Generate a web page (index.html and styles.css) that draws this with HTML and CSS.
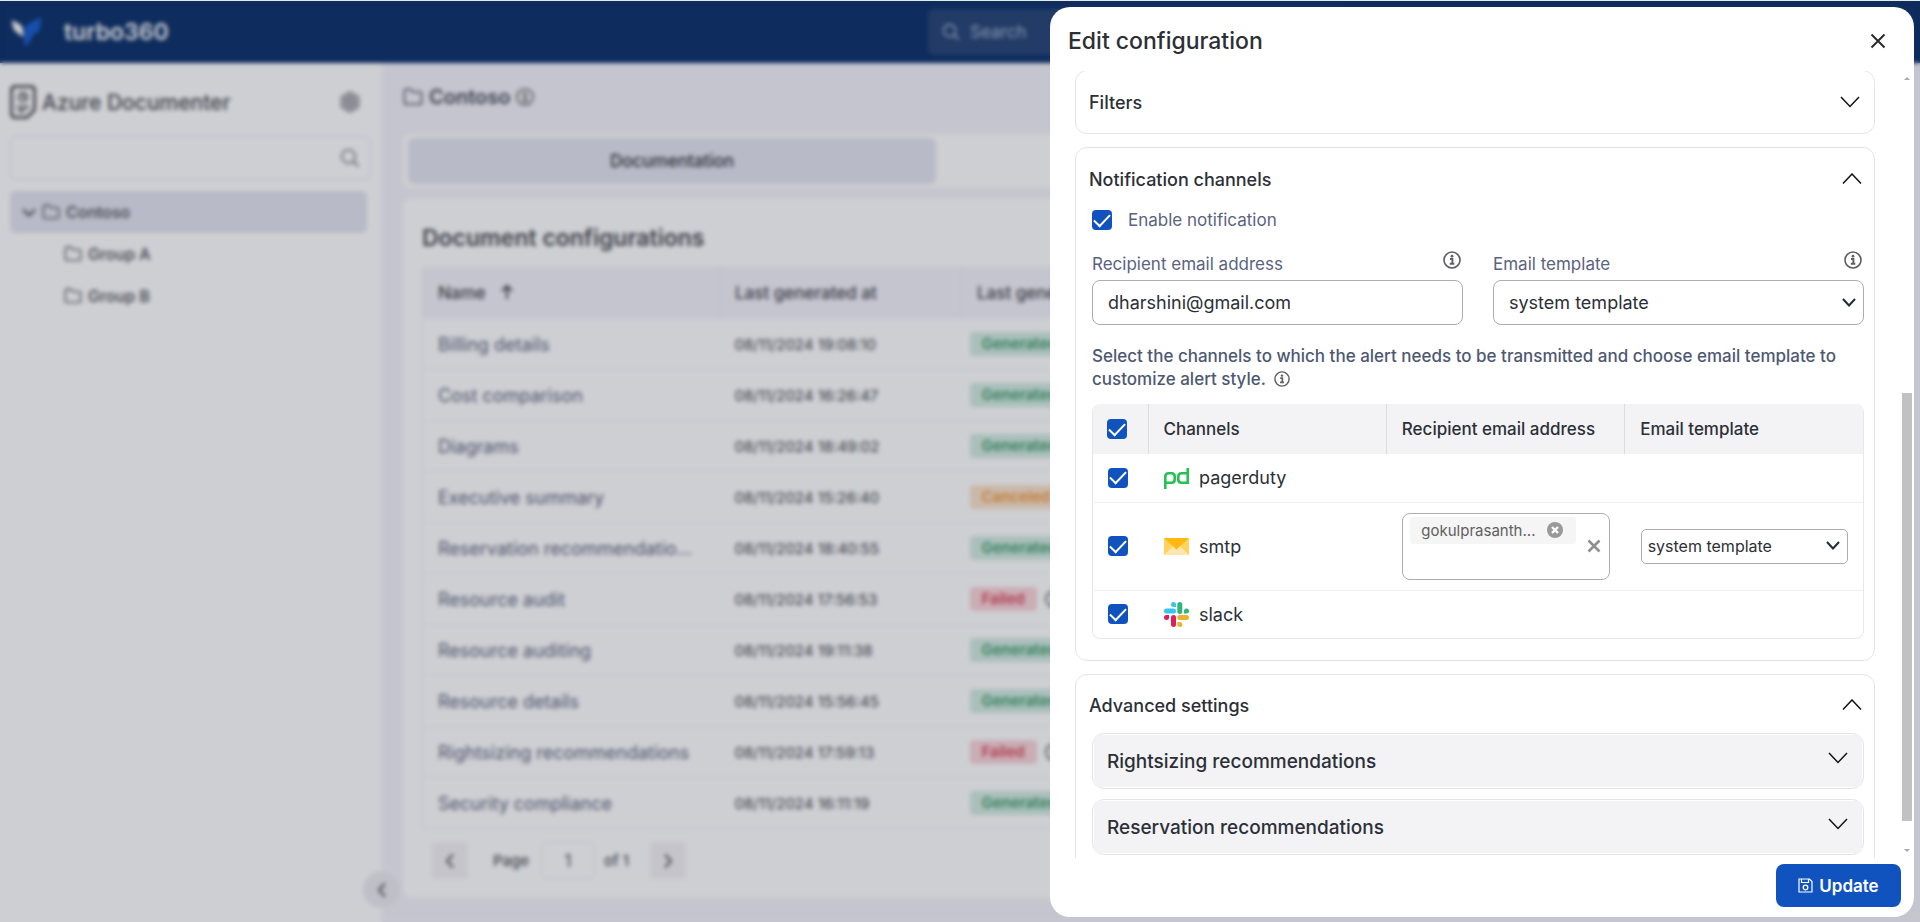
FILE: index.html
```html
<!DOCTYPE html>
<html lang="en">
<head>
<meta charset="utf-8">
<title>Azure Documenter - Edit configuration</title>
<link rel="stylesheet" href="styles.css">
</head>
<body>
<svg class="sprite" aria-hidden="true">
  <symbol id="folder" viewBox="0 0 22 20"><path d="M1.5 16V3.5Q1.5 1.5 3.500 1.500H8L11 4.500H18.500Q20.500 4.500 20.500 6.500V16Q20.500 18 18.500 18H3.500Q1.500 18 1.500 16Z" fill="none" stroke="currentColor" stroke-width="1.700"/></symbol>
  <symbol id="search" viewBox="0 0 20 20"><circle cx="8.500" cy="8.500" r="6.700" fill="none" stroke="currentColor" stroke-width="1.800"/><path d="M13.500 13.500L18.500 18.500" stroke="currentColor" stroke-width="2"/></symbol>
  <symbol id="info" viewBox="0 0 18 18"><circle cx="9" cy="9" r="8" fill="none" stroke="currentColor" stroke-width="1.600"/><circle cx="9" cy="5.200" r="1.400" fill="currentColor"/><path d="M7 8H9.400V12.600M6.800 12.800H11.300" fill="none" stroke="currentColor" stroke-width="1.900"/></symbol>
  <symbol id="down" viewBox="0 0 20 12"><path d="M1 1L10 10.500L19 1" fill="none" stroke="currentColor" stroke-width="1.500"/></symbol>
  <symbol id="up" viewBox="0 0 20 12"><path d="M1 10.500L10 1L19 10.500" fill="none" stroke="currentColor" stroke-width="1.500"/></symbol>
  <symbol id="left" viewBox="0 0 10 16"><path d="M8 1.500L2 8L8 14.500" fill="none" stroke="currentColor" stroke-width="2"/></symbol>
  <symbol id="right" viewBox="0 0 10 16"><path d="M2 1.500L8 8L2 14.500" fill="none" stroke="currentColor" stroke-width="2"/></symbol>
</svg>

<div class="app">
  <header class="topbar">
    <div class="brand">
      <svg class="brand-mark" viewBox="0 0 30 30"><path d="M0 3L9 8Q12 12 11 20L3 14Q0 10 0 3Z" fill="#fff"/><path d="M29 0L16 7Q12 10 12 17V29Q19 27 20 19L27 14Q29 10 29 0Z" fill="#1c5fd0"/></svg>
      <span class="brand-name">turbo360</span>
    </div>
    <label class="top-search"><svg class="i18"><use href="#search"/></svg><input type="text" placeholder="Search" aria-label="Search"></label>
  </header>
  <div class="columns">
    <aside class="sidebar">
      <div class="side-head">
        <svg class="doc-icon" viewBox="0 0 26 34"><path d="M5 1.500H21Q24.500 1.500 24.500 5V25L17 32.500H5Q1.500 32.500 1.500 29V5Q1.500 1.500 5 1.500Z" fill="none" stroke="#3c3e44" stroke-width="2.500"/><circle cx="13" cy="12" r="4.500" fill="none" stroke="#3c3e44" stroke-width="1.600"/><path d="M13 9V12L15 13M7 22H19M8 26H15" fill="none" stroke="#3c3e44" stroke-width="2"/></svg>
        <h1 class="side-title">Azure Documenter</h1>
        <svg class="gear" viewBox="0 0 22 22"><path d="M11 1L19.500 6V16L11 21L2.500 16V6Z" fill="#b5b6bb" stroke="#a3a4aa" stroke-width="2"/><circle cx="11" cy="11" r="3.500" fill="none" stroke="#9d9fa5" stroke-width="2"/></svg>
      </div>
      <label class="side-search"><input type="text" aria-label="Search groups"><svg class="i20"><use href="#search"/></svg></label>
      <nav class="tree">
        <a class="node node-on" href="#"><svg class="caret" viewBox="0 0 14 9"><path d="M1 1.500L7 7.500L13 1.500" fill="none" stroke="currentColor" stroke-width="2.200"/></svg><svg class="fold"><use href="#folder"/></svg>Contoso</a>
        <a class="node node-sub" href="#"><svg class="fold"><use href="#folder"/></svg>Group A</a>
        <a class="node node-sub" href="#"><svg class="fold"><use href="#folder"/></svg>Group B</a>
      </nav>
      <button class="collapse" aria-label="Collapse"><svg class="pg"><use href="#left"/></svg></button>
    </aside>
    <main class="main">
      <div class="crumb"><svg class="fold-lg"><use href="#folder"/></svg><span>Contoso</span><svg class="i18"><use href="#info"/></svg></div>
      <div class="tabs"><button class="tab tab-on">Documentation</button><button class="tab"></button></div>
      <section class="card">
        <h2 class="card-title">Document configurations</h2>
        <table class="docs">
          <colgroup><col class="c-name"><col class="c-date"><col></colgroup>
          <thead><tr><th>Name <svg class="sort" viewBox="0 0 14 16"><path d="M7 15V2M2 7L7 2L12 7" fill="none" stroke="currentColor" stroke-width="2"/></svg></th><th>Last generated at</th><th>Last generated status</th></tr></thead>
          <tbody>
            <tr><td>Billing details</td><td>08/11/2024 19:08:10</td><td><span class="tag ok">Generated</span></td></tr>
            <tr><td>Cost comparison</td><td>08/11/2024 16:26:47</td><td><span class="tag ok">Generated</span></td></tr>
            <tr><td>Diagrams</td><td>08/11/2024 18:49:02</td><td><span class="tag ok">Generated</span></td></tr>
            <tr><td>Executive summary</td><td>08/11/2024 15:26:40</td><td><span class="tag warn">Canceled</span></td></tr>
            <tr><td>Reservation recommendatio…</td><td>08/11/2024 18:40:55</td><td><span class="tag ok">Generated</span></td></tr>
            <tr><td>Resource audit</td><td>08/11/2024 17:56:53</td><td><span class="tag bad">Failed</span><svg class="i18 tag-info"><use href="#info"/></svg></td></tr>
            <tr><td>Resource auditing</td><td>08/11/2024 19:11:38</td><td><span class="tag ok">Generated</span></td></tr>
            <tr><td>Resource details</td><td>08/11/2024 15:56:45</td><td><span class="tag ok">Generated</span></td></tr>
            <tr><td>Rightsizing recommendations</td><td>08/11/2024 17:59:13</td><td><span class="tag bad">Failed</span><svg class="i18 tag-info"><use href="#info"/></svg></td></tr>
            <tr><td>Security compliance</td><td>08/11/2024 16:11:19</td><td><span class="tag ok">Generated</span></td></tr>
          </tbody>
        </table>
        <div class="pager">
          <button class="pg-btn" aria-label="Previous page"><svg class="pg"><use href="#left"/></svg></button>
          <label class="pg-label" for="page">Page</label><input class="pg-input" id="page" type="text" value="1"><span class="pg-of">of 1</span>
          <button class="pg-btn" aria-label="Next page"><svg class="pg"><use href="#right"/></svg></button>
        </div>
      </section>
    </main>
  </div>
</div>

<div class="overlay"></div>

<div class="drawer" role="dialog" aria-labelledby="drawer-title">
  <header class="drawer-head">
    <h2 class="drawer-title" id="drawer-title">Edit configuration</h2>
    <button class="close" aria-label="Close"><svg viewBox="0 0 16 16"><path d="M1.500 1.500L14.500 14.500M14.500 1.500L1.500 14.500" stroke="#2b2b2b" stroke-width="2"/></svg></button>
  </header>
  <div class="drawer-body">
    <div class="panels">
      <section class="panel panel-first">
        <button class="panel-head">Filters<svg class="chev chev-in"><use href="#down"/></svg></button>
      </section>
      <section class="panel">
        <button class="panel-head">Notification channels<svg class="chev"><use href="#up"/></svg></button>
        <div class="panel-body">
          <label class="enable"><input class="check" type="checkbox" checked>Enable notification</label>
          <div class="fields">
            <div class="field">
              <div class="field-top"><label for="email">Recipient email address</label><svg class="i18"><use href="#info"/></svg></div>
              <input class="control" id="email" type="text" value="dharshini@gmail.com">
            </div>
            <div class="field">
              <div class="field-top"><label for="tpl">Email template</label><svg class="i18"><use href="#info"/></svg></div>
              <div class="select-wrap"><select class="control" id="tpl"><option>system template</option></select><svg class="select-chev" viewBox="0 0 14 9"><path d="M1 1L7 7.500L13 1" fill="none" stroke="#222b38" stroke-width="2"/></svg></div>
            </div>
          </div>
          <p class="hint">Select the channels to which the alert needs to be transmitted and choose email template to customize alert style. <svg class="i16"><use href="#info"/></svg></p>
          <div class="channels-wrap">
          <table class="channels">
            <colgroup><col class="k-check"><col><col><col></colgroup>
            <thead><tr><th><input class="check" type="checkbox" checked aria-label="Select all"></th><th>Channels</th><th>Recipient email address</th><th>Email template</th></tr></thead>
            <tbody>
              <tr class="short"><td><input class="check" type="checkbox" checked aria-label="pagerduty"></td>
                <td><span class="chan"><svg class="chan-icon" viewBox="0 0 25 25"><g fill="none" stroke="#25c151" stroke-width="2.600"><path d="M1.300 24V11.500Q1.300 8.300 4.500 8.300H7.500Q10.700 8.300 10.700 11.500V14.500Q10.700 17.700 7.500 17.700H1.300"/><path d="M23.700 3V17.700H17.500Q14.300 17.700 14.300 14.500V11.500Q14.300 8.300 17.500 8.300H23.700"/></g></svg>pagerduty</span></td><td></td><td></td></tr>
              <tr class="tall"><td><input class="check" type="checkbox" checked aria-label="smtp"></td>
                <td><span class="chan"><svg class="chan-icon" viewBox="0 0 25 25"><path d="M0 4H25V21H0Z" fill="#ffd262"/><path d="M0 21L12.500 9L25 21Z" fill="#ffe6ad"/><path d="M0 4H25L12.500 15.500Z" fill="#ffb80f"/></svg>smtp</span></td>
                <td><div class="chips"><span class="chip"><span class="chip-text">gokulprasanth...</span><button class="chip-x" aria-label="Remove"><svg viewBox="0 0 16 16"><circle cx="8" cy="8" r="8" fill="#999"/><path d="M5 5L11 11M11 5L5 11" stroke="#fff" stroke-width="2.400"/></svg></button></span><button class="clear" aria-label="Clear all"><svg viewBox="0 0 14 14"><path d="M1.500 1.500L12.500 12.500M12.500 1.500L1.500 12.500" stroke="#8f8f8f" stroke-width="2.600"/></svg></button></div></td>
                <td><div class="select-wrap"><select class="control control-sm" aria-label="smtp template"><option>system template</option></select><svg class="select-chev" viewBox="0 0 14 9"><path d="M1 1L7 7.500L13 1" fill="none" stroke="#222b38" stroke-width="2"/></svg></div></td></tr>
              <tr class="short"><td><input class="check" type="checkbox" checked aria-label="slack"></td>
                <td><span class="chan"><svg class="chan-icon" viewBox="0 0 25 25"><g fill="#36c5f0"><path d="M9.500 0A2.500 2.500 0 0 0 9.500 5H12V2.500A2.500 2.500 0 0 0 9.500 0Z"/><rect x="0" y="6.500" width="12" height="5" rx="2.500"/></g><g fill="#2eb67d"><rect x="13.300" y="0" width="5" height="12" rx="2.500"/><path d="M25 9A2.500 2.500 0 0 0 20 9V11.500H22.500A2.500 2.500 0 0 0 25 9Z"/></g><g fill="#ecb22e"><rect x="13.300" y="13" width="11.700" height="5" rx="2.500"/><path d="M15.800 25A2.500 2.500 0 0 0 15.800 20H13.300V22.500A2.500 2.500 0 0 0 15.800 25Z"/></g><g fill="#e01e5a"><rect x="7" y="13" width="5" height="12" rx="2.500"/><path d="M0 15.500A2.500 2.500 0 0 0 5 15.500V13H2.500A2.500 2.500 0 0 0 0 15.500Z"/></g></svg>slack</span></td><td></td><td></td></tr>
            </tbody>
          </table>
          </div>
        </div>
      </section>
      <section class="panel">
        <button class="panel-head panel-head-tight">Advanced settings<svg class="chev"><use href="#up"/></svg></button>
        <div class="panel-body subs">
          <div class="sub"><button class="sub-head">Rightsizing recommendations<svg class="chev"><use href="#down"/></svg></button></div>
          <div class="sub"><button class="sub-head">Reservation recommendations<svg class="chev"><use href="#down"/></svg></button></div>
        </div>
      </section>
    </div>
    <div class="scrollbar" aria-hidden="true">
      <svg class="arrow" viewBox="0 0 6 3"><path d="M0 3L3 0L6 3Z" fill="#a9a9a9"/></svg>
      <div class="track"><div class="thumb"></div></div>
      <svg class="arrow" viewBox="0 0 6 3"><path d="M0 0L3 3L6 0Z" fill="#a9a9a9"/></svg>
    </div>
  </div>
  <footer class="drawer-foot">
    <button class="update"><svg class="save" viewBox="0 0 15 15"><path d="M1 1H11.500L14 3.500V14H1ZM3.500 1V4.500H10.500V1" fill="none" stroke="#fff" stroke-width="1.200"/><circle cx="7.500" cy="9.500" r="2.300" fill="none" stroke="#fff" stroke-width="1.300"/></svg>Update</button>
  </footer>
</div>
</body>
</html>
```
FILE: styles.css
```css
* { box-sizing: border-box; }
html, body { height: 100%; }
body { margin: 0; overflow: hidden; font-family: Inter, "Noto Sans", sans-serif; font-size: 17px; color: #2c3036; }
h1, h2, p { margin: 0; }
button { font: inherit; color: inherit; background: none; border: 0; padding: 0; }
input, select { font: inherit; color: inherit; }
svg { display: block; flex: none; }
.sprite { position: absolute; width: 0; height: 0; }
.i16 { width: 16px; height: 16px; color: #5f6063; }
.i18 { width: 18px; height: 18px; color: #5f6063; }
.i20 { width: 20px; height: 20px; color: #8b8c90; }

/* Page behind the drawer */
.app { height: 100%; display: flex; flex-direction: column; border-top: 1px solid #e3ece8; }
.topbar { height: 62px; flex: none; background: #0f346c; display: flex; align-items: center; padding: 0 12px; }
.brand { width: 916px; display: flex; align-items: center; gap: 22px; }
.brand-mark { width: 30px; height: 30px; }
.brand-name { color: #fff; font-size: 23px; font-weight: 600; }
.top-search { display: flex; align-items: center; gap: 8px; height: 46px; width: 420px; padding: 0 14px; border-radius: 6px; background: #284778; }
.top-search .i18 { color: #a9b8d2; }
.top-search input { background: none; border: 0; min-width: 0; outline: 0; }
.top-search input::placeholder { color: #a9b8d2; opacity: 1; }
.columns { flex: 1; display: flex; min-height: 0; }
.sidebar { position: relative; width: 382px; flex: none; background: #fff; padding: 21px 11px 0 10px; }
.side-head { display: flex; align-items: center; height: 36px; padding-right: 10px; }
.doc-icon { width: 26px; height: 34px; }
.side-title { margin-left: 6px; flex: 1; font-size: 21px; font-weight: 500; color: #4b4d53; }
.gear { width: 22px; height: 22px; }
.side-search { display: flex; align-items: center; height: 44px; margin-top: 16px; padding: 0 10px; border: 1px solid #e9e9ef; border-radius: 6px; }
.side-search input { flex: 1; min-width: 0; border: 0; outline: 0; }
.tree { margin-top: 11px; padding-right: 4px; }
.node { display: flex; align-items: center; gap: 6px; height: 42px; padding-left: 10px; border-radius: 6px; color: #4d4f57; text-decoration: none; font-size: 16px; font-weight: 500; }
.node-on { background: #e4e6f0; padding-left: 12px; }
.node-sub { padding-left: 54px; }
.caret { width: 14px; height: 9px; }
.fold { width: 18px; height: 16px; }
.collapse { position: absolute; right: -18px; bottom: 14px; width: 37px; height: 37px; border-radius: 50%; background: #ededf0; display: flex; align-items: center; justify-content: center; }
.pg { width: 10px; height: 16px; color: #55565b; }
.main { flex: 1; min-width: 0; display: flex; flex-direction: column; background: #f4f3fa; padding: 17px 20px 24px 21px; }
.crumb { height: 34px; display: flex; align-items: center; gap: 6px; font-size: 20px; font-weight: 600; color: #4b4f5a; }
.fold-lg { width: 20px; height: 18px; }
.tabs { display: flex; flex: none; margin-top: 20px; padding: 4px 5px; height: 54px; background: #fff; border-radius: 8px; }
.tab { width: 528px; border-radius: 6px; font-weight: 500; color: #33353b; height: 46px; }
.tab-on { background: #e4e6f0; }
.card { flex: 1; margin-top: 10px; background: #fff; border-radius: 8px; padding: 25px 19px 0; }
.card-title { font-size: 23px; line-height: 30px; font-weight: 600; color: #4b4d53; }
.docs { width: 100%; margin-top: 14px; table-layout: fixed; border-collapse: collapse; border: 1px solid #f0f0f4; text-align: left; }
.c-name { width: 297px; }
.c-date { width: 242px; }
.docs th { height: 51px; padding: 0 15px; background: #f4f3fa; border-right: 1px solid #ecebf3; font-size: 17px; font-weight: 500; color: #44464e; }
.docs td { height: 51px; padding: 0 15px; font-size: 18px; color: #5f6780; border-top: 1px solid #f4f4f7; white-space: nowrap; overflow: hidden; }
.docs td:nth-child(2) { font-size: 15px; color: #44464c; }
.docs td:nth-child(3) { padding: 0 8px; }
.sort { display: inline-block; width: 14px; height: 16px; margin-left: 10px; vertical-align: -1px; }
.tag { display: inline-block; padding: 0 12px; line-height: 24px; border-radius: 4px; font-size: 15px; font-weight: 600; }
.ok { background: #d3ece2; color: #3f9d6d; }
.warn { background: #fbe3cb; color: #ef9a3d; }
.bad { background: #fbd5da; color: #dc4a5c; }
.tag-info { display: inline-block; vertical-align: middle; margin-left: 8px; }
.pager { display: flex; align-items: center; margin: 13px 0 0 10px; color: #54565c; }
.pg-btn { width: 36px; height: 37px; background: #f5f2f5; border-radius: 4px; display: flex; align-items: center; justify-content: center; }
.pg-label { margin-left: 25px; width: 38px; font-size: 15px; font-weight: 500; }
.pg-input { width: 54px; height: 37px; margin: 0 9px 0 10px; text-align: center; border: 1px solid #ececf0; border-radius: 6px; }
.pg-of { width: 46px; font-size: 15px; font-weight: 500; }

.overlay { position: fixed; inset: 1px 0 0; background: rgba(8, 15, 35, .2); backdrop-filter: blur(2px); }

/* Drawer */
.drawer { position: fixed; top: 7px; right: 6px; bottom: 5px; width: 45%; display: flex; flex-direction: column; background: #fff; border-radius: 20px; }
.drawer-head { height: 64px; flex: none; display: flex; align-items: center; justify-content: space-between; padding: 3px 28px 0 18px; }
.drawer-title { font-size: 23px; font-weight: 500; }
.close svg { width: 16px; height: 16px; }
.drawer-body { flex: 1; min-height: 0; display: flex; overflow: hidden; }
.panels { flex: 1; min-width: 0; overflow: hidden; padding-left: 25px; display: flex; flex-direction: column; gap: 13px; }
.panel { flex: none; border: 1px solid #e4e4e7; border-radius: 12px; }
.panel-first { margin-top: -1px; }
.panel-head { width: 100%; height: 62px; display: flex; align-items: center; justify-content: space-between; padding: 0 12px 0 13px; font-size: 18px; font-weight: 500; text-align: left; }
.panel-head-tight { height: 58px; padding-top: 2px; }
.chev { width: 20px; height: 12px; color: #111; }
.chev-in { margin-right: 2px; }
.panel-body { padding: 0 10px 21px 16px; }
.enable { display: flex; align-items: center; gap: 16px; height: 20px; color: #5a6380; }
.check { appearance: none; flex: none; display: grid; place-items: center; width: 20px; height: 20px; margin: 0; border-radius: 4px; background: #1053be; }
.check::after { content: ""; width: 14px; height: 7px; border: solid #fff; border-width: 0 0 2px 2px; transform: translateY(-2px) rotate(-46deg); }
.fields { display: grid; grid-template-columns: 1fr 1fr; gap: 30px; margin-top: 20px; }
.field-top { height: 30px; display: flex; justify-content: space-between; align-items: flex-start; padding-right: 2px; color: #5a6380; }
.field-top label { line-height: 28px; }
.field-top svg { margin-top: 1px; }
.control { display: block; width: 100%; height: 45px; padding: 0 15px; background: #fff; border: 1px solid #adadad; border-radius: 8px; font-size: 18px; appearance: none; outline: 0; }
.control-sm { height: 35px; padding: 0 6px; border-radius: 5px; font-size: 16px; }
.select-wrap { position: relative; }
.select-chev { position: absolute; top: calc(50% - 5px); right: 8px; width: 14px; height: 9px; }
.hint { margin-top: 20px; line-height: 23px; font-weight: 500; color: #4e5872; }
.hint svg { display: inline-block; margin-left: 4px; vertical-align: -2px; }
.channels-wrap { margin-top: 13px; border: 1px solid #e8e8eb; border-top: 0; border-radius: 8px; overflow: hidden; }
.channels { width: 100%; table-layout: fixed; border-collapse: collapse; text-align: left; }
.k-check { width: 55px; }
.channels th { height: 50px; padding: 0 15px; background: #f3f3f6; border-right: 1px solid #dcdde3; font-weight: 500; }
.channels th:first-child { padding: 0 14px; }
.channels th:last-child { border-right: 0; }
.channels td { padding: 0 15px 0 16px; font-size: 18px; border-top: 1px solid #f0f0f2; }
.channels td:first-child { padding: 0 15px; }
.short td { height: 48px; }
.tall td { height: 88px; }
.channels tbody tr:first-child td { border-top: 0; }
.chan { display: flex; align-items: center; gap: 10px; }
.chan-icon { width: 25px; height: 25px; }
.chips { display: flex; align-items: center; justify-content: space-between; height: 67px; padding: 3px 8px 3px 7px; border: 1px solid #adadad; border-radius: 8px; }
.chip { align-self: flex-start; display: flex; align-items: center; justify-content: space-between; width: 166px; height: 27px; padding: 0 13px 0 11px; background: #f5f5f5; border-radius: 3px; font-size: 15px; color: #606060; }
.chip-x svg { width: 16px; height: 16px; }
.clear svg { width: 14px; height: 14px; }
.subs { display: flex; flex-direction: column; gap: 10px; }
.sub { border: 1px solid #e4e4e7; border-radius: 12px; padding: 1px; height: 56px; }
.sub-head { width: 100%; height: 100%; display: flex; align-items: center; justify-content: space-between; padding: 0 14px 0 13px; background: #f3f3f6; border-radius: 4px; font-size: 19px; font-weight: 500; }
.sub-head .chev { margin-bottom: 6px; }
.scrollbar { width: 39px; flex: none; display: flex; flex-direction: column; align-items: center; padding: 6px 2px 6px 27px; }
.arrow { width: 6px; height: 3px; }
.track { flex: 1; width: 10px; padding: 313px 0 28px; }
.thumb { height: 100%; background: #c1c1c1; }
.drawer-foot { flex: none; height: 59px; display: flex; justify-content: flex-end; padding: 6px 13px 10px; }
.update { display: flex; align-items: center; justify-content: center; gap: 6px; width: 125px; background: #1053be; color: #fff; border-radius: 8px; font-weight: 600; }
.save { width: 15px; height: 15px; }
```
